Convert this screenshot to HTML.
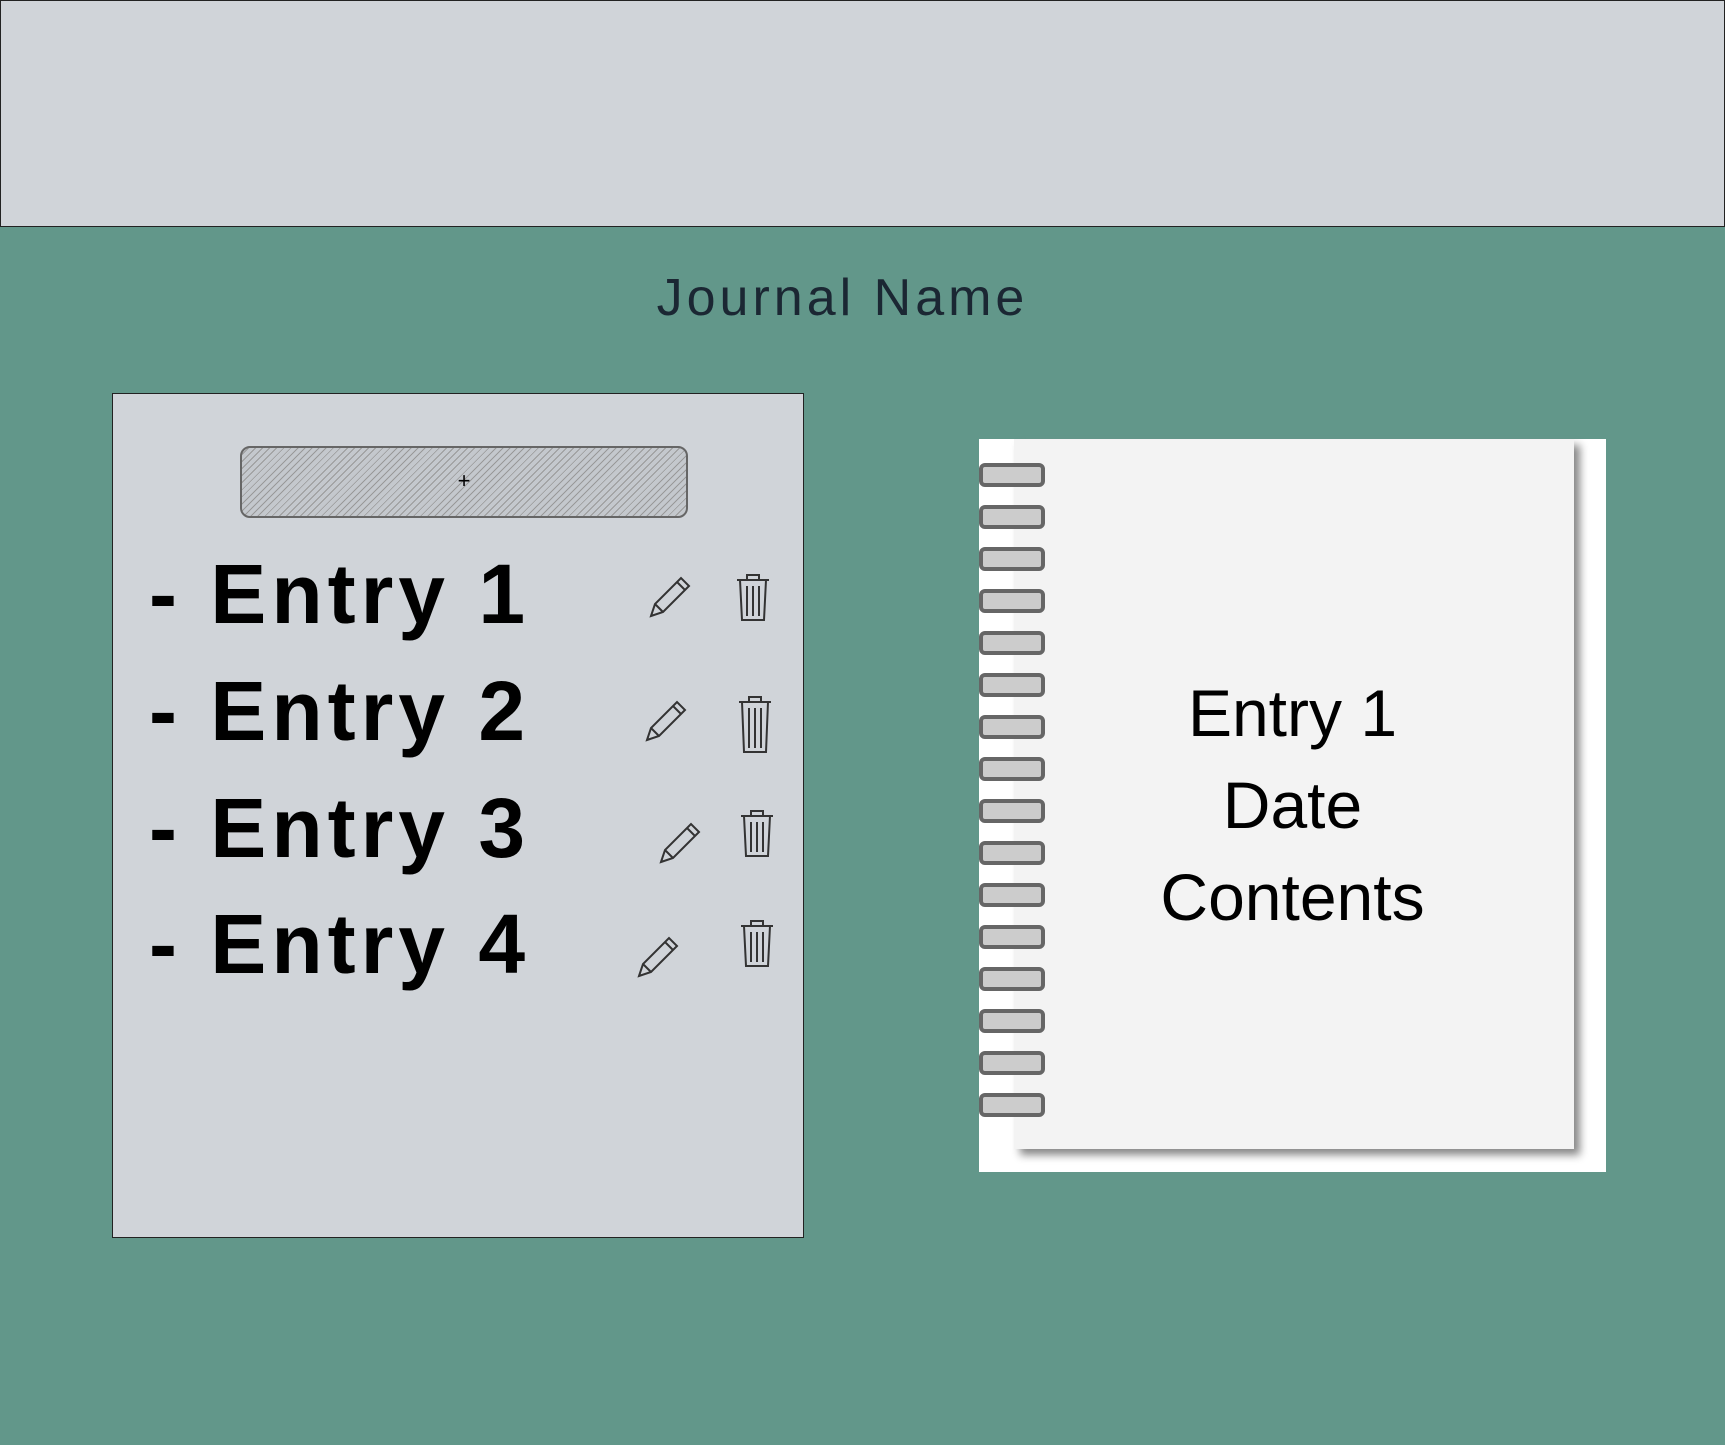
<!DOCTYPE html>
<html><head><style>
body{margin:0;width:1725px;height:1445px;background:#62978a;position:relative;overflow:hidden;font-family:"Comic Sans MS","Liberation Sans",sans-serif}
.hdr{position:absolute;left:0;top:0;width:1723px;height:225px;background:#d0d4d9;border:1px solid #222}
.title{position:absolute;left:0;width:1685px;top:268px;text-align:center;font-size:52px;color:#1b2733;letter-spacing:4px}
.panel{position:absolute;left:112px;top:393px;width:690px;height:843px;background:#d0d4d9;border:1.5px solid #222}
.btn{position:absolute;left:127px;top:52px;width:444px;height:68px;border:2px solid #666;border-radius:10px;background:repeating-linear-gradient(135deg,#c4c8cd 0 4px,#999 4px 5px);text-align:center;font-size:22px;line-height:66px;color:#000}
.e{position:absolute;left:36px;font-size:84px;font-weight:bold;color:#000;letter-spacing:5px}
.ic{position:absolute}
.nb{position:absolute;left:979px;top:439px;width:627px;height:733px;background:#fff}
.pg{position:absolute;left:35px;top:0;width:560px;height:710px;background:#f3f3f3;box-shadow:6px 6px 8px #888}
.ring{position:absolute;left:0;width:58px;height:16px;border:4px solid #666;border-radius:6px;background:#ccc}
.nt{position:absolute;left:0;width:627px;text-align:center;font-size:66px;color:#000;line-height:92px;top:228px}
</style></head><body>
<div class="hdr"></div>
<div class="title">Journal Name</div>
<div class="panel">
<div class="btn">+</div>
<div class="e" style="top:152px">- Entry 1</div>
<div class="e" style="top:269px">- Entry 2</div>
<div class="e" style="top:386px">- Entry 3</div>
<div class="e" style="top:502px">- Entry 4</div>
<svg class="ic" style="left:530px;top:178px" width="52" height="52" viewBox="0 0 52 52"><path d="M8 44 L12 32 L38 6 L46 14 L20 40 Z M12 32 L20 40 M34 10 L42 18" fill="none" stroke="#333" stroke-width="2"/></svg>
<svg class="ic" style="left:620px;top:178px" width="40" height="52" viewBox="0 0 40 52"><path d="M4 8 H36 M14 8 V3 H26 V8 M7 8 L9 48 H31 L33 8 M14 14 V44 M20 14 V44 M26 14 V44" fill="none" stroke="#333" stroke-width="2"/></svg>
<svg class="ic" style="left:526px;top:302px" width="52" height="52" viewBox="0 0 52 52"><path d="M8 44 L12 32 L38 6 L46 14 L20 40 Z M12 32 L20 40 M34 10 L42 18" fill="none" stroke="#333" stroke-width="2"/></svg>
<svg class="ic" style="left:622px;top:300px" width="40" height="62" viewBox="0 0 40 62"><path d="M4 8 H36 M14 8 V3 H26 V8 M7 8 L9 58 H31 L33 8 M14 14 V54 M20 14 V54 M26 14 V54" fill="none" stroke="#333" stroke-width="2"/></svg>
<svg class="ic" style="left:540px;top:424px" width="52" height="52" viewBox="0 0 52 52"><path d="M8 44 L12 32 L38 6 L46 14 L20 40 Z M12 32 L20 40 M34 10 L42 18" fill="none" stroke="#333" stroke-width="2"/></svg>
<svg class="ic" style="left:624px;top:414px" width="40" height="52" viewBox="0 0 40 52"><path d="M4 8 H36 M14 8 V3 H26 V8 M7 8 L9 48 H31 L33 8 M14 14 V44 M20 14 V44 M26 14 V44" fill="none" stroke="#333" stroke-width="2"/></svg>
<svg class="ic" style="left:518px;top:538px" width="52" height="52" viewBox="0 0 52 52"><path d="M8 44 L12 32 L38 6 L46 14 L20 40 Z M12 32 L20 40 M34 10 L42 18" fill="none" stroke="#333" stroke-width="2"/></svg>
<svg class="ic" style="left:624px;top:524px" width="40" height="52" viewBox="0 0 40 52"><path d="M4 8 H36 M14 8 V3 H26 V8 M7 8 L9 48 H31 L33 8 M14 14 V44 M20 14 V44 M26 14 V44" fill="none" stroke="#333" stroke-width="2"/></svg>
</div>
<div class="nb">
<div class="pg"></div>
<div class="ring" style="top:24px"></div><div class="ring" style="top:66px"></div><div class="ring" style="top:108px"></div><div class="ring" style="top:150px"></div><div class="ring" style="top:192px"></div><div class="ring" style="top:234px"></div><div class="ring" style="top:276px"></div><div class="ring" style="top:318px"></div><div class="ring" style="top:360px"></div><div class="ring" style="top:402px"></div><div class="ring" style="top:444px"></div><div class="ring" style="top:486px"></div><div class="ring" style="top:528px"></div><div class="ring" style="top:570px"></div><div class="ring" style="top:612px"></div><div class="ring" style="top:654px"></div>
<div class="nt">Entry 1<br>Date<br>Contents</div>
</div>
</body></html>
